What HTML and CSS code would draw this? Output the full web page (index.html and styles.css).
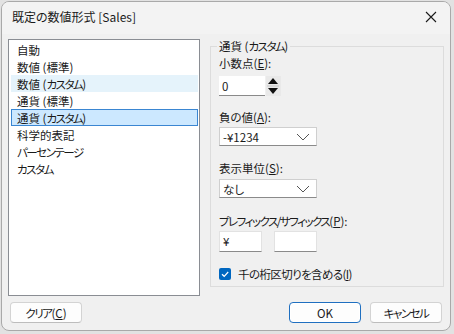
FILE: index.html
```html
<!DOCTYPE html>
<html lang="ja">
<head>
    <meta charset="UTF-8">
    <title>既定の数値形式 [Sales]</title>
    <link rel="stylesheet" href="styles.css">
</head>
<body>

    <div class="window">
        <!-- Title bar -->
        <div class="titlebar">
            <span class="title">既定の数値形式 [Sales]</span>
            <svg class="close" width="12" height="12" viewBox="0 0 12 12">
                <path d="M1 1 L11 11 M11 1 L1 11" stroke="#1a1a1a" stroke-width="1.1" fill="none"/>
            </svg>
        </div>

        <div class="main">
            <!-- Format list -->
            <ul class="format-list">
                <li>自動</li>
                <li>数値 (標準)</li>
                <li class="hover">数値 (<span class="kana">カスタム</span>)</li>
                <li>通貨 (標準)</li>
                <li class="selected">通貨 (<span class="kana">カスタム</span>)</li>
                <li>科学的表記</li>
                <li><span class="kana">パーセンテージ</span></li>
                <li><span class="kana">カスタム</span></li>
            </ul>

            <!-- Options group -->
            <fieldset class="group">
                <legend>通貨 (<span class="kana">カスタム</span>)</legend>

                <div class="field">
                    <label>小数点(<u>E</u>):</label>
                    <div class="spinner">
                        <div class="spin-value">0</div>
                        <div class="spin-buttons">
                            <svg width="14" height="20" viewBox="0 0 14 20">
                                <path d="M2 8 L7 2 L12 8 Z" fill="#111"/>
                                <path d="M2 12 L7 18 L12 12 Z" fill="#111"/>
                                <line x1="1" y1="10" x2="13" y2="10" stroke="#c8c8c8"/>
                            </svg>
                        </div>
                    </div>
                </div>

                <div class="field field-neg">
                    <label>負の値(<u>A</u>):</label>
                    <div class="combo">
                        <span>-¥1234</span>
                        <svg width="14" height="8" viewBox="0 0 14 8"><path d="M1 1 L7 7 L13 1" stroke="#555" fill="none"/></svg>
                    </div>
                </div>

                <div class="field field-unit">
                    <label>表示単位(<u>S</u>):</label>
                    <div class="combo">
                        <span>なし</span>
                        <svg width="14" height="8" viewBox="0 0 14 8"><path d="M1 1 L7 7 L13 1" stroke="#555" fill="none"/></svg>
                    </div>
                </div>

                <div class="field field-affix">
                    <label><span class="kana">プレフィックス/サフィックス</span>(<u>P</u>):</label>
                    <div class="affix-row">
                        <div class="text-box">¥</div>
                        <div class="text-box"></div>
                    </div>
                </div>

                <div class="check-row">
                    <span class="checkbox">
                        <svg width="12" height="12" viewBox="0 0 12 12"><path d="M3 6.2 L5.2 8.3 L9.2 4" stroke="#fff" stroke-width="1.2" fill="none"/></svg>
                    </span>
                    <span class="check-label">千の桁区切りを含める(<u>I</u>)</span>
                </div>
            </fieldset>
        </div>

        <!-- Buttons -->
        <div class="buttons">
            <button><span class="kana">クリア</span>(<u>C</u>)</button>
            <div class="spacer"></div>
            <button class="primary">OK</button>
            <button><span class="kana">キャンセル</span></button>
        </div>
    </div>

</body>
</html>
```

FILE: styles.css
```css
body {
    margin: 0;
    background: #e2e2e2;
    font-family: "Noto Sans CJK JP", "Noto Sans", sans-serif;
    font-size: 11.5px;
    font-feature-settings: "palt";
    color: #1a1a1a;
}

.kana {
    letter-spacing: -1.5px;
}

.window {
    margin: 1px;
    width: 448px;
    height: 328px;
    border: 1px solid #a9a9a9;
    border-radius: 8px;
    background: #f0f0f0;
    overflow: hidden;
    display: flex;
    flex-direction: column;
}

.titlebar {
    height: 32px;
    display: flex;
    align-items: center;
    padding: 0 9px 0 10px;
    background: #f3f3f3;
    font-size: 12px;
}

.title {
    flex: 1;
    line-height: 16px;
    padding-bottom: 2px;
}

.close {
    margin-right: 4px;
    margin-bottom: 2px;
}

.main {
    display: flex;
    padding: 5px 6px 0 6px;
    gap: 10px;
    height: 256px;
}

.format-list {
    list-style: none;
    margin: 0;
    padding: 1px 1px 0 1px;
    width: 188px;
    height: 254px;
    background: #fff;
    border: 1px solid #8a8d93;
}

.format-list li {
    height: 17px;
    line-height: 17px;
    margin-left: 1px;
    border: 1px solid transparent;
    border-left-width: 0;
    border-right-width: 0;
    box-sizing: border-box;
    padding-left: 6px;
}

.format-list li.hover {
    background: #e5f3fb;
}

.format-list li.selected {
    background: #cce8ff;
    border: 1px solid #3a86d2;
    padding-left: 5px;
}

.group {
    margin: 0;
    width: 234px;
    height: 248px;
    box-sizing: border-box;
    border: 1px solid #dcdcdc;
    padding: 2px 8px 0 8px;
    min-width: 0;
}

.group legend {
    padding: 0 2px;
    margin-left: -2px;
    line-height: 14px;
}

.field label {
    display: block;
    line-height: 16px;
}

.spinner {
    margin-top: 5px;
    display: flex;
    width: 62px;
    height: 20px;
}

.spin-value {
    width: 47px;
    background: #fff;
    border-bottom: 1px solid #8a8a8a;
    padding-left: 3px;
    line-height: 20px;
    box-sizing: border-box;
}

.spin-buttons {
    width: 15px;
    margin-left: 1px;
    background: #e9e9e9;
}

.field-neg { margin-top: 13px; }
.field-unit { margin-top: 14px; }
.field-affix { margin-top: 15px; }

.combo {
    margin-top: 2px;
    width: 98px;
    height: 19px;
    box-sizing: border-box;
    background: #fff;
    border: 1px solid #cfcfcf;
    border-bottom-color: #8a8a8a;
    display: flex;
    align-items: center;
    justify-content: space-between;
    padding: 0 6px 0 3px;
}

.field-unit .combo {
    margin-top: 3px;
}

.affix-row {
    margin-top: 2px;
    display: flex;
    gap: 12px;
}

.text-box {
    width: 43px;
    height: 21px;
    box-sizing: border-box;
    background: #fff;
    border: 1px solid #e2e2e2;
    border-bottom-color: #8a8a8a;
    padding-left: 3px;
    line-height: 19px;
}

.check-row {
    margin-top: 15px;
    display: flex;
    align-items: center;
    gap: 7px;
    line-height: 14px;
}

.check-label {
    letter-spacing: -0.6px;
}

.checkbox {
    width: 12px;
    height: 12px;
    background: #0067c0;
    border-radius: 2px;
    display: flex;
}

.buttons {
    display: flex;
    gap: 9px;
    padding: 7px 8px 0 8px;
}

.spacer {
    flex: 1;
}

button {
    width: 72px;
    height: 21px;
    font-family: inherit;
    font-size: 11.5px;
    font-feature-settings: "palt";
    background: #fdfdfd;
    border: 1px solid #d3d3d3;
    border-bottom-color: #bdbdbd;
    border-radius: 4px;
    padding: 0;
    color: #1a1a1a;
}

button.primary {
    border: 1px solid #1f6fc0;
    box-shadow: inset 0 0 0 1px #ffffff;
}
```
